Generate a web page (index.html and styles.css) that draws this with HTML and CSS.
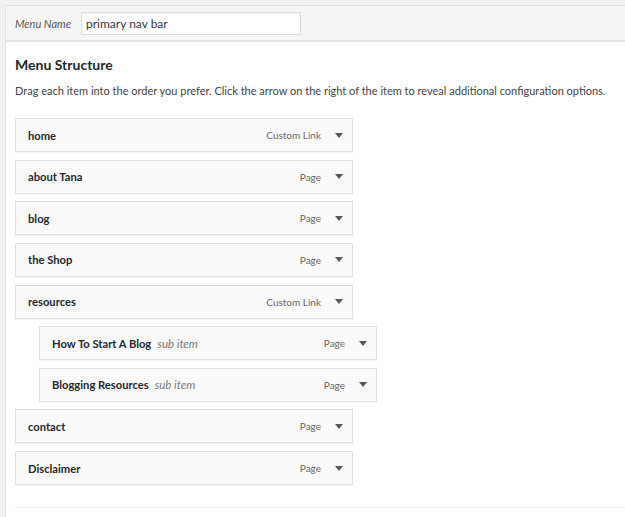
FILE: index.html
```html
<!DOCTYPE html>
<html>
<head>
<meta charset="utf-8">
<link rel="stylesheet" href="styles.css">
</head>
<body>
<div class="panel">
  <div class="header">
    <label class="name-label">Menu Name</label>
    <input class="name-input" type="text" value="primary nav bar">
  </div>
  <div class="content">
    <h3 class="title">Menu Structure</h3>
    <p class="desc">Drag each item into the order you prefer. Click the arrow on the right of the item to reveal additional configuration options.</p>
    <ul class="menu">
      <li class="item"><span class="item-title">home</span><span class="item-type">Custom Link</span><span class="arrow"></span></li>
      <li class="item"><span class="item-title">about Tana</span><span class="item-type">Page</span><span class="arrow"></span></li>
      <li class="item"><span class="item-title">blog</span><span class="item-type">Page</span><span class="arrow"></span></li>
      <li class="item"><span class="item-title">the Shop</span><span class="item-type">Page</span><span class="arrow"></span></li>
      <li class="item"><span class="item-title">resources</span><span class="item-type">Custom Link</span><span class="arrow"></span></li>
      <li class="item sub"><span class="item-title">How To Start A Blog</span><span class="sub-label">sub item</span><span class="item-type">Page</span><span class="arrow"></span></li>
      <li class="item sub"><span class="item-title">Blogging Resources</span><span class="sub-label">sub item</span><span class="item-type">Page</span><span class="arrow"></span></li>
      <li class="item"><span class="item-title">contact</span><span class="item-type">Page</span><span class="arrow"></span></li>
      <li class="item"><span class="item-title">Disclaimer</span><span class="item-type">Page</span><span class="arrow"></span></li>
    </ul>
    <div class="footer-line"></div>
  </div>
</div>
</body>
</html>
```
FILE: styles.css
```css
* { box-sizing: border-box; }
html, body { margin: 0; padding: 0; }
body {
  background: #f1f1f1;
  font-family: Lato, "Liberation Sans", Arial, sans-serif;
  font-size: 13px;
  color: #444;
  height: 517px;
  overflow: hidden;
}
.panel {
  margin: 5px 0 0 5px;
  border-top: 1px solid #e2e2e2;
  border-left: 1px solid #e2e2e2;
  background: #fff;
  height: 520px;
}
.header {
  background: #f5f5f5;
  border-bottom: 2px solid #e4e4e4;
  height: 36px;
  display: flex;
  align-items: center;
  padding-left: 9px;
}
.name-label {
  font-style: italic;
  color: #555;
  font-size: 11px;
  width: 66px;
}
.name-input {
  width: 220px;
  height: 23px;
  border: 1px solid #ddd;
  background: #fff;
  font-family: inherit;
  font-size: 12px;
  color: #32373c;
  padding: 0 4px;
  outline: none;
  box-shadow: inset 0 1px 2px rgba(0,0,0,0.07);
}
.content {
  padding: 0 0 0 9px;
}
.title {
  margin: 0;
  padding-top: 14px;
  font-size: 14px;
  font-weight: 700;
  color: #23282d;
  line-height: 18px;
}
.desc {
  margin: 8px 0 0;
  font-size: 11px;
  line-height: 18px;
  color: #444;
  white-space: nowrap;
}
.menu {
  list-style: none;
  margin: 0;
  padding: 0;
  padding-top: 18px;
}
.item {
  width: 338px;
  height: 34px;
  border: 1px solid #dfdfdf;
  background: #fafafa;
  display: flex;
  align-items: center;
  padding: 0 0 0 12px;
  margin-bottom: 7.625px;
  box-shadow: 0 1px 1px rgba(0,0,0,0.04);
}
.item.sub { margin-left: 24px; }
.item-title {
  font-weight: 700;
  color: #23282d;
  font-size: 11.2px;
}
.sub-label {
  font-style: italic;
  color: #777;
  font-size: 11.5px;
  margin-left: 6px;
}
.item-type {
  margin-left: auto;
  color: #666;
  font-size: 10px;
}
.arrow {
  width: 0;
  height: 0;
  border-left: 4px solid transparent;
  border-right: 4px solid transparent;
  border-top: 5px solid #555;
  margin: 0 9px 0 14px;
}
.footer-line {
  margin-top: 22px;
  border-top: 1px solid #eee;
}
```
